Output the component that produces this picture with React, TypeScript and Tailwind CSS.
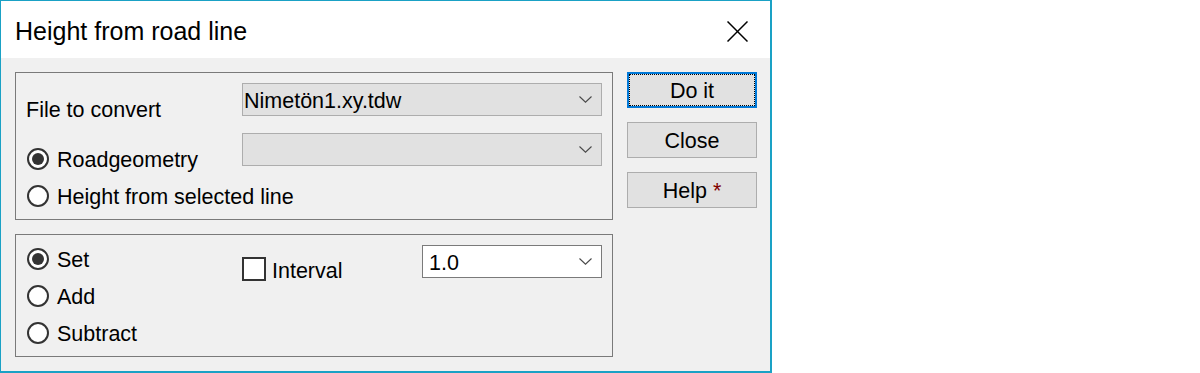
import React from "react";

function Chevron() {
  return (
    <svg width="13" height="7" viewBox="0 0 13 7" className="shrink-0">
      <polyline points="0.5,0.5 6.5,6.2 12.5,0.5" fill="none" stroke="#4a4a4a" strokeWidth="1.1" />
    </svg>
  );
}

function Radio({ label, checked }: { label: string; checked?: boolean }) {
  return (
    <div className="flex items-center gap-[8px] h-[24px]">
      <div className="w-[22px] h-[22px] rounded-full border-2 border-[#333333] bg-white flex items-center justify-center shrink-0">
        {checked && <div className="w-[12px] h-[12px] rounded-full bg-[#333333]" />}
      </div>
      <span className="leading-[24px] pt-[2px] whitespace-nowrap">{label}</span>
    </div>
  );
}

function Button({ children, focused }: { children: React.ReactNode; focused?: boolean }) {
  if (focused) {
    return (
      <div className="w-[130px] h-[36px] border-2 border-[#0078d7] bg-[#e1e1e1] flex">
        <div className="flex-1 border border-dotted border-black flex items-center justify-center leading-[24px] pt-[2px]">
          {children}
        </div>
      </div>
    );
  }
  return (
    <div className="w-[130px] h-[36px] border border-[#adadad] bg-[#e1e1e1] flex items-center justify-center leading-[24px] pt-[2px]">
      {children}
    </div>
  );
}

export default function App() {
  return (
    <div className="w-[1200px] h-[373px] bg-white font-['Liberation_Sans',Arial,sans-serif] text-[21.5px] text-black">
      <div className="w-[772px] h-[373px] flex flex-col border-t border-l border-r-2 border-b-2 border-[#1aa1c5] bg-[#f0f0f0]">
        {/* Title bar */}
        <div className="h-[57px] bg-white flex items-center justify-between pl-[14px] pr-[22px] pt-[3px] shrink-0">
          <span className="text-[25px] leading-[28px]">Height from road line</span>
          <svg width="21" height="21" viewBox="0 0 21 21">
            <line x1="0.5" y1="0.5" x2="20.5" y2="20.5" stroke="#000" strokeWidth="1.5" />
            <line x1="20.5" y1="0.5" x2="0.5" y2="20.5" stroke="#000" strokeWidth="1.5" />
          </svg>
        </div>

        {/* Body */}
        <div className="flex-1 flex pl-[14px] pt-[14px] gap-[14px]">
          <div className="w-[598px] flex flex-col gap-[14px]">
            {/* Group 1 */}
            <div className="h-[148px] border border-[#7a7a7a] pl-[11px] pr-[10px] pt-[10px] flex flex-col">
              <div className="flex h-[33px]">
                <div className="w-[215px] ml-[-1px] pt-[15px] leading-[24px] whitespace-nowrap">File to convert</div>
                <div className="w-[360px] h-[33px] ml-[1px] border border-[#adadad] bg-[#e1e1e1] flex items-center justify-between pl-[1px] pr-[9px]">
                  <span className="leading-[24px] pt-[2px]">Nimetön1.xy.tdw</span>
                  <Chevron />
                </div>
              </div>
              <div className="flex h-[33px] mt-[17px]">
                <div className="w-[215px] pt-[14px]">
                  <Radio label="Roadgeometry" checked />
                </div>
                <div className="w-[360px] h-[33px] border border-[#adadad] bg-[#e1e1e1] flex items-center justify-end pr-[9px]">
                  <Chevron />
                </div>
              </div>
              <div className="mt-[18px]">
                <Radio label="Height from selected line" />
              </div>
            </div>

            {/* Group 2 */}
            <div className="h-[123px] border border-[#7a7a7a] pl-[11px] pr-[10px] flex">
              <div className="w-[215px] pt-[12px] flex flex-col gap-[13px]">
                <Radio label="Set" checked />
                <Radio label="Add" />
                <Radio label="Subtract" />
              </div>
              <div className="w-[180px] pt-[22px]">
                <div className="flex items-center gap-[6px] h-[24px]">
                  <div className="w-[24px] h-[24px] border-2 border-[#333333] bg-white shrink-0" />
                  <span className="leading-[24px] pt-[3px]">Interval</span>
                </div>
              </div>
              <div className="w-[180px] pt-[10px]">
                <div className="w-[180px] h-[33px] border border-[#7a7a7a] bg-white flex items-center justify-between pl-[6px] pr-[9px]">
                  <span className="leading-[24px] pt-[2px]">1.0</span>
                  <Chevron />
                </div>
              </div>
            </div>
          </div>

          {/* Buttons */}
          <div className="w-[130px] flex flex-col gap-[14px]">
            <Button focused>Do it</Button>
            <Button>Close</Button>
            <Button>
              <span>
                Help <span className="text-[#800000]">*</span>
              </span>
            </Button>
          </div>
        </div>
      </div>
    </div>
  );
}
